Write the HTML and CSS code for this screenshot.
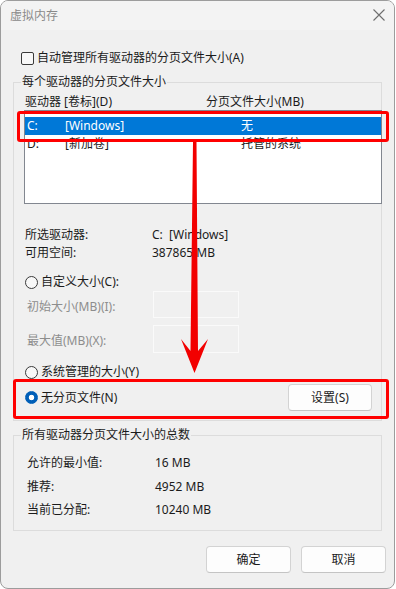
FILE: index.html
```html
<!DOCTYPE html>
<html lang="zh-CN">
<head>
<meta charset="utf-8">
<title>虚拟内存</title>
<link rel="stylesheet" href="styles.css">
</head>
<body>
<div class="window">
  <div class="titlebar">
    <span class="title">虚拟内存</span>
    <svg class="close" width="12" height="12" viewBox="0 0 12 12"><path d="M0.5 0.5 L11.5 11.5 M11.5 0.5 L0.5 11.5" stroke="#6e6e6e" stroke-width="1.1" fill="none"/></svg>
  </div>
  <div class="content">
    <div class="check-row">
      <span class="checkbox"></span>
      <span>自动管理所有驱动器的分页文件大小(A)</span>
    </div>

    <div class="group group-drives">
      <span class="group-label">每个驱动器的分页文件大小</span>
      <div class="list-header">
        <span class="col-h1">驱动器 [卷标](D)</span>
        <span>分页文件大小(MB)</span>
      </div>
      <div class="listbox">
        <div class="list-row selected">
          <span class="c1">C:</span><span class="c2">[Windows]</span><span>无</span>
        </div>
        <div class="list-row">
          <span class="c1">D:</span><span class="c2">[新加卷]</span><span>托管的系统</span>
        </div>
      </div>
      <div class="info">
        <div class="info-row"><span class="info-label">所选驱动器:</span><span>C:&nbsp;&nbsp;[Windows]</span></div>
        <div class="info-row"><span class="info-label">可用空间:</span><span>387865 MB</span></div>
      </div>
      <div class="radio-row r-custom"><span class="radio"></span><span>自定义大小(C):</span></div>
      <div class="field-row f-init"><span class="field-label">初始大小(MB)(I):</span><span class="field-box"></span></div>
      <div class="field-row f-max"><span class="field-label">最大值(MB)(X):</span><span class="field-box"></span></div>
      <div class="radio-row r-system"><span class="radio"></span><span>系统管理的大小(Y)</span></div>
      <div class="none-row">
        <div class="radio-line"><span class="radio checked"></span><span>无分页文件(N)</span></div>
        <button class="btn btn-set">设置(S)</button>
      </div>
    </div>

    <div class="group group-total">
      <span class="group-label">所有驱动器分页文件大小的总数</span>
      <div class="total-row"><span class="total-label">允许的最小值:</span><span>16 MB</span></div>
      <div class="total-row"><span class="total-label">推荐:</span><span>4952 MB</span></div>
      <div class="total-row"><span class="total-label">当前已分配:</span><span>10240 MB</span></div>
    </div>
  </div>
  <div class="buttons">
    <button class="btn btn-dlg">确定</button>
    <button class="btn btn-dlg">取消</button>
  </div>

  <div class="mark mark-list"></div>
  <div class="mark mark-none"></div>
  <svg class="arrow" width="396" height="589" viewBox="0 0 396 589">
    <path d="M193 142 L196.5 142 L198 351 L208 339 L194.5 373 L181 339 L190.5 351 Z" fill="#f20000"/>
  </svg>
</div>
</body>
</html>
```

FILE: styles.css
```css
html, body {
  margin: 0;
  padding: 0;
  background: #ffffff;
}

body {
  font-family: "Noto Sans", "Noto Sans CJK SC", sans-serif;
  font-size: 12px;
  color: #1b1b1b;
}

.window {
  position: relative;
  width: 395px;
  height: 589px;
  box-sizing: border-box;
  border: 1px solid #9c9c9c;
  border-radius: 8px;
  background: #f0f0f0;
  overflow: hidden;
}

.titlebar {
  height: 29px;
  background: #f3f3f3;
  display: flex;
  align-items: center;
  justify-content: space-between;
  padding: 0 9px 0 9px;
}

.title {
  color: #8a8a8a;
  font-size: 12px;
  line-height: 16px;
}

.close {
  display: block;
  margin-top: -1px;
}

.content {
  padding-left: 12px;
}

.check-row {
  margin-top: 20px;
  height: 16px;
  display: flex;
  align-items: center;
  padding-left: 8px;
  line-height: 16px;
}

.checkbox {
  width: 11px;
  height: 11px;
  border: 1px solid #3a3a3a;
  border-radius: 2px;
  background: #f8f8f8;
  margin-right: 3px;
  flex: none;
}

.group {
  position: relative;
  box-sizing: border-box;
  width: 369px;
  border: 1px solid #dcdcdc;
}

.group-label {
  position: absolute;
  top: -9px;
  left: 7px;
  padding: 0 1px;
  background: #f0f0f0;
  line-height: 16px;
}

.group-drives {
  margin-top: 16px;
  height: 339px;
}

.list-header {
  margin-top: 11px;
  height: 16px;
  line-height: 16px;
  display: flex;
  padding-left: 11px;
}

.col-h1 {
  width: 181px;
}

.listbox {
  margin-left: 10px;
  width: 358px;
  height: 94px;
  box-sizing: border-box;
  border: 1px solid #828790;
  background: #ffffff;
  padding: 6px 0 0 0;
}

.list-row {
  height: 18px;
  line-height: 18px;
  display: flex;
  padding-left: 2px;
}

.list-row.selected {
  background: #0078d7;
  color: #ffffff;
}

.c1 {
  width: 38px;
}

.c2 {
  width: 176px;
}

.info {
  margin-top: 22px;
  padding-left: 11px;
}

.info-row {
  height: 18px;
  line-height: 18px;
  display: flex;
}

.info-label {
  width: 127px;
}

.radio-row {
  height: 18px;
  line-height: 18px;
  display: flex;
  align-items: center;
  padding-left: 11px;
}

.r-custom {
  margin-top: 11px;
}

.r-system {
  margin-top: 10px;
}

.radio {
  width: 11px;
  height: 11px;
  border: 1px solid #3a3a3a;
  border-radius: 50%;
  background: #f8f8f8;
  margin-right: 3px;
  flex: none;
}

.radio.checked {
  border-color: #005fb8;
  background: radial-gradient(circle, #ffffff 0, #ffffff 2.4px, #005fb8 3.1px);
}

.field-row {
  display: flex;
  align-items: center;
  padding-left: 13px;
  color: #8d8d8d;
  line-height: 18px;
}

.f-max {
  margin-top: 7px;
}

.field-label {
  width: 126px;
  padding-top: 4px;
}

.field-box {
  width: 86px;
  height: 27px;
  box-sizing: border-box;
  border: 1px solid #fafafa;
}

.f-max .field-box {
  height: 28px;
}

.none-row {
  margin-top: 3px;
  height: 27px;
  display: flex;
  align-items: center;
  justify-content: space-between;
  padding: 0 9px 0 11px;
}

.radio-line {
  display: flex;
  align-items: center;
  line-height: 18px;
}

.btn {
  font-family: inherit;
  font-size: 12px;
  color: #1b1b1b;
  background: #fdfdfd;
  border: 1px solid #d3d3d3;
  border-bottom-color: #c4c4c4;
  border-radius: 4px;
  box-sizing: border-box;
  padding: 0;
  line-height: 16px;
}

.btn-set {
  width: 84px;
  height: 27px;
}

.group-total {
  margin-top: 14px;
  height: 96px;
  padding-top: 18px;
  padding-left: 13px;
}

.total-row {
  height: 18px;
  line-height: 18px;
  display: flex;
  margin-bottom: 5.5px;
}

.total-label {
  width: 128px;
}

.buttons {
  margin-top: 15px;
  display: flex;
  justify-content: flex-end;
  gap: 10px;
  padding-right: 8px;
}

.btn-dlg {
  width: 85px;
  height: 27px;
}

.mark {
  position: absolute;
  box-sizing: border-box;
  border: 3px solid #ff0000;
  border-radius: 3px;
}

.mark-list {
  left: 16px;
  top: 110px;
  width: 372px;
  height: 31px;
}

.mark-none {
  left: 12px;
  top: 378px;
  width: 376px;
  height: 40px;
}

.arrow {
  position: absolute;
  left: -1px;
  top: -1px;
  pointer-events: none;
}
```
